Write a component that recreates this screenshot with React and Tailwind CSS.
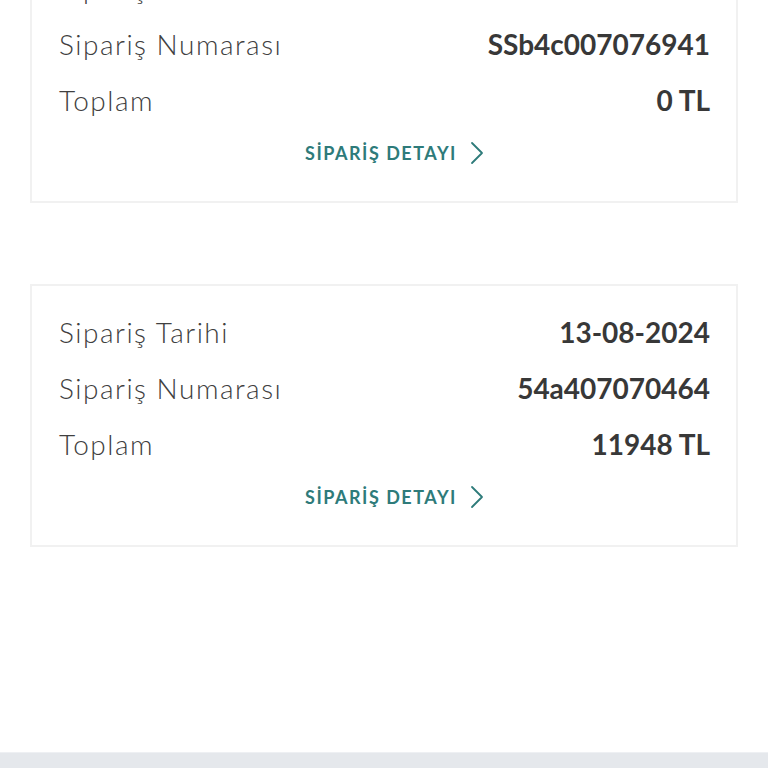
import React from "react";

function Row({ label, value }) {
  return (
    <div className="flex h-[56px] items-center justify-between">
      <span className="text-[28px] font-light tracking-[1.5px] text-[#404040]">{label}</span>
      <span className="text-[28px] font-bold text-[#383838]">{value}</span>
    </div>
  );
}

function Card({ date, number, total, className = "" }) {
  return (
    <div
      className={
        "bg-white border-2 border-[#f1f1f1] pl-[27px] pr-[26px] pt-[18px] pb-[23px] " + className
      }
    >
      <Row label="Sipariş Tarihi" value={date} />
      <Row label="Sipariş Numarası" value={number} />
      <Row label="Toplam" value={total} />
      <div className="flex h-[50px] items-center justify-center gap-[13px] pl-[20px]">
        <span className="text-[18px] font-bold tracking-[1.5px] text-[#2e7b7a]">SİPARİŞ DETAYI</span>
        <svg width="14" height="24" viewBox="0 0 14 24" fill="none">
          <path d="M2 2 L12 12 L2 22" stroke="#2e7b7a" strokeWidth="1.8" strokeLinecap="round" strokeLinejoin="round" />
        </svg>
      </div>
    </div>
  );
}

export default function App() {
  return (
    <div
      className="flex h-[768px] flex-col overflow-hidden bg-white"
      style={{ fontFamily: "Lato, 'Noto Sans', sans-serif" }}
    >
      <div className="flex flex-1 flex-col gap-[81px] px-[30px]">
        <Card className="mt-[-60px]" date="12-08-2024" number="SSb4c007076941" total="0 TL" />
        <Card date="13-08-2024" number="54a407070464" total="11948 TL" />
      </div>
      <div className="h-[16px] border-t border-[#eef0f3] bg-[#e5e8ec]" />
    </div>
  );
}
